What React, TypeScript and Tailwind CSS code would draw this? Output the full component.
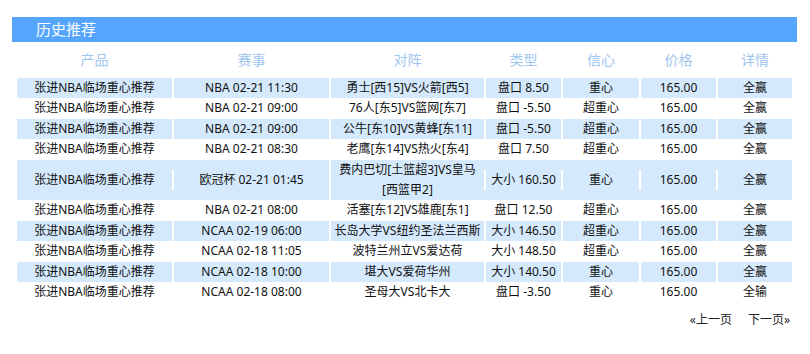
import React from "react";

const widths = ["w-[155px]", "w-[157px]", "w-[155px]", "w-[77px]", "w-[78px]", "w-[77px]", "w-[76px]"];
const headers = ["产品", "赛事", "对阵", "类型", "信心", "价格", "详情"];

type Row = { cells: React.ReactNode[]; tall?: boolean };

const P = "张进NBA临场重心推荐";
const rows: Row[] = [
  { cells: [P, "NBA 02-21 11:30", "勇士[西15]VS火箭[西5]", "盘口 8.50", "重心", "165.00", "全赢"] },
  { cells: [P, "NBA 02-21 09:00", "76人[东5]VS篮网[东7]", "盘口 -5.50", "超重心", "165.00", "全赢"] },
  { cells: [P, "NBA 02-21 09:00", "公牛[东10]VS黄蜂[东11]", "盘口 -5.50", "超重心", "165.00", "全赢"] },
  { cells: [P, "NBA 02-21 08:30", "老鹰[东14]VS热火[东4]", "盘口 7.50", "超重心", "165.00", "全赢"] },
  {
    tall: true,
    cells: [
      P,
      "欧冠杯 02-21 01:45",
      <>
        费内巴切[土篮超3]VS皇马
        <br />
        [西篮甲2]
      </>,
      "大小 160.50",
      "重心",
      "165.00",
      "全赢",
    ],
  },
  { cells: [P, "NBA 02-21 08:00", "活塞[东12]VS雄鹿[东1]", "盘口 12.50", "超重心", "165.00", "全赢"] },
  { cells: [P, "NCAA 02-19 06:00", "长岛大学VS纽约圣法兰西斯", "大小 146.50", "超重心", "165.00", "全赢"] },
  { cells: [P, "NCAA 02-18 11:05", "波特兰州立VS爱达荷", "大小 148.50", "超重心", "165.00", "全赢"] },
  { cells: [P, "NCAA 02-18 10:00", "堪大VS爱荷华州", "大小 140.50", "重心", "165.00", "全赢"] },
  { cells: [P, "NCAA 02-18 08:00", "圣母大VS北卡大", "盘口 -3.50", "重心", "165.00", "全输"] },
];

export default function App() {
  return (
    <div
      className="w-[810px] h-[354px] bg-white pt-[17px] pl-[12px] overflow-hidden"
      style={{ fontFamily: '"Noto Sans", "Noto Sans CJK SC", sans-serif' }}
    >
      <div className="w-[785px] h-[25px] bg-[#56a5fc] flex items-center pl-[24px] text-[15px] text-white leading-none">
        历史推荐
      </div>
      <div className="ml-[5px] w-[775px]">
        <div className="flex h-[35.5px] items-center">
          {headers.map((h, i) => (
            <div key={i} className={`${widths[i]} flex justify-center text-[14px] text-[#9fc6ef] ${i > 0 ? "pl-[2px]" : ""}`}>
              {h}
            </div>
          ))}
        </div>
        {rows.map((r, ri) => {
          const blue = ri % 2 === 0;
          return (
            <div
              key={ri}
              className={`flex ${r.tall ? "h-[40.5px] items-center" : "h-[20.5px] items-stretch"} ${blue ? "bg-[#d5e9fc]" : "bg-white"}`}
            >
              {r.cells.map((c, ci) => (
                <div key={ci} className={`${widths[ci]} flex ${r.tall ? "items-center" : "items-stretch"}`}>
                  <div
                    className={`flex-1 flex items-center justify-center text-center whitespace-nowrap text-[12px] leading-[20px] text-[#111] ${
                      ci > 0 ? "border-l-2 border-white" : ""
                    }`}
                  >
                    <span>{c}</span>
                  </div>
                </div>
              ))}
            </div>
          );
        })}
        <div className="flex justify-end gap-[16px] pr-[2px] mt-[7px] text-[12px] leading-[20px] text-[#222]">
          <span>«上一页</span>
          <span>下一页»</span>
        </div>
      </div>
    </div>
  );
}
